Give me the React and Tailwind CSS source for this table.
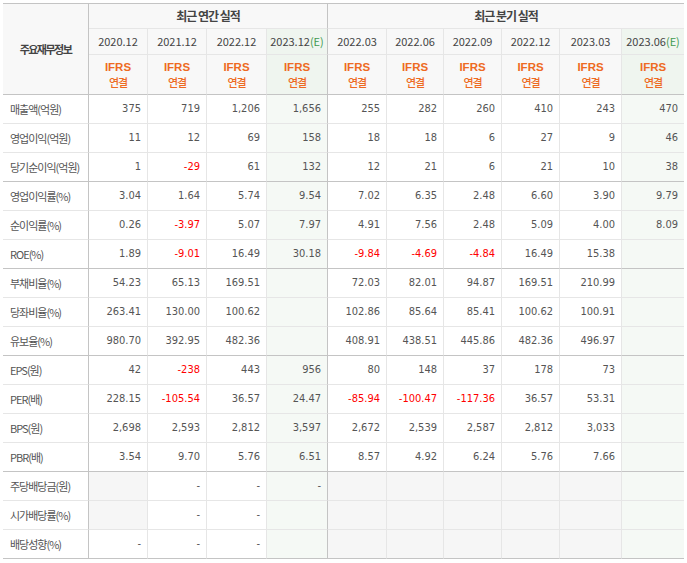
const annual = ["2020.12", "2021.12", "2022.12", "2023.12"];
const quarter = ["2022.03", "2022.06", "2022.09", "2022.12", "2023.03", "2023.06"];
const widths = [86, 59, 59, 60, 61, 59, 57, 58, 58, 62, 62];

// null = empty gray cell, "" = empty cell
const rows = [
  ["매출액(억원)", ["375", "719", "1,206", "1,656"], ["255", "282", "260", "410", "243", "470"]],
  ["영업이익(억원)", ["11", "12", "69", "158"], ["18", "18", "6", "27", "9", "46"]],
  ["당기순이익(억원)", ["1", "-29", "61", "132"], ["12", "21", "6", "21", "10", "38"], true],
  ["영업이익률(%)", ["3.04", "1.64", "5.74", "9.54"], ["7.02", "6.35", "2.48", "6.60", "3.90", "9.79"]],
  ["순이익률(%)", ["0.26", "-3.97", "5.07", "7.97"], ["4.91", "7.56", "2.48", "5.09", "4.00", "8.09"]],
  ["ROE(%)", ["1.89", "-9.01", "16.49", "30.18"], ["-9.84", "-4.69", "-4.84", "16.49", "15.38", ""], true],
  ["부채비율(%)", ["54.23", "65.13", "169.51", ""], ["72.03", "82.01", "94.87", "169.51", "210.99", ""]],
  ["당좌비율(%)", ["263.41", "130.00", "100.62", ""], ["102.86", "85.64", "85.41", "100.62", "100.91", ""]],
  ["유보율(%)", ["980.70", "392.95", "482.36", ""], ["408.91", "438.51", "445.86", "482.36", "496.97", ""], true],
  ["EPS(원)", ["42", "-238", "443", "956"], ["80", "148", "37", "178", "73", ""]],
  ["PER(배)", ["228.15", "-105.54", "36.57", "24.47"], ["-85.94", "-100.47", "-117.36", "36.57", "53.31", ""]],
  ["BPS(원)", ["2,698", "2,593", "2,812", "3,597"], ["2,672", "2,539", "2,587", "2,812", "3,033", ""]],
  ["PBR(배)", ["3.54", "9.70", "5.76", "6.51"], ["8.57", "4.92", "6.24", "5.76", "7.66", ""], true],
  ["주당배당금(원)", [null, "-", "-", "-"], [null, null, null, null, null, ""]],
  ["시가배당률(%)", [null, "-", "-", ""], [null, null, null, null, null, ""]],
  ["배당성향(%)", ["-", "-", "-", ""], [null, null, null, null, null, ""]],
];

const kr = "font-['Noto_Sans_CJK_KR',sans-serif]";
const num = "font-['DejaVu_Sans_Condensed','DejaVu_Sans',sans-serif] font-stretch-condensed";
const dark = "border-[#c4c4c4]";

function borderR(i) {
  // i = column index among 11
  if (i === 10) return "";
  if (i === 0 || i === 4) return "border-r border-r-[#c4c4c4]";
  return "border-r border-r-[#e6e6e6]";
}

function DataCell({ value, col, groupEnd }) {
  const estimate = col === 4 || col === 10;
  const bg = estimate ? "bg-[#f5f9f5]" : value === null ? "bg-[#f6f6f6]" : "bg-white";
  const red = value && value.startsWith("-") && value.length > 1;
  return (
    <td
      className={`h-[29px] p-0 pr-[6px] text-right text-[11px] ${num} ${bg} ${borderR(col)} border-b ${
        groupEnd ? "border-b-[#c4c4c4]" : "border-b-[#e6e6e6]"
      } ${red ? "text-[#ff0000]" : "text-[#555]"}`}
    >
      {value}
    </td>
  );
}

function DateCell({ label, col, estimate }) {
  return (
    <th
      className={`h-[26px] p-0 font-normal text-[11px] text-[#444] ${kr} border-b border-b-[#e6e6e6] ${borderR(col)} ${
        estimate ? "bg-[#eff5ef]" : "bg-[#f8f8f8]"
      }`}
    >
      {label}
      {estimate && <span className="text-[#3f9a4f]">(E)</span>}
    </th>
  );
}

function IfrsCell({ col, estimate }) {
  return (
    <th
      className={`h-[40px] p-0 text-[#ee6a22] border-b ${dark} ${borderR(col)} ${
        estimate ? "bg-[#eff5ef]" : "bg-[#f8f8f8]"
      }`}
    >
      <div className="font-['Liberation_Sans',sans-serif] font-bold text-[11.5px] leading-[13px]">IFRS</div>
      <div className={`mt-[2px] ${kr} font-medium text-[11px] leading-[13px] tracking-[-1px]`}>연결</div>
    </th>
  );
}

export default function App() {
  return (
    <div className="bg-white pt-[3px] pl-[3px]">
      <table className="table-fixed border-separate border-spacing-0 w-[681px]">
        <colgroup>
          {widths.map((w, i) => (
            <col key={i} style={{ width: w }} />
          ))}
        </colgroup>
        <thead>
          <tr>
            <th
              rowSpan={3}
              className={`p-0 bg-[#f8f8f8] border-t ${dark} border-b border-r border-r-[#c4c4c4] text-[11px] font-bold tracking-[-1.5px] text-[#444] ${kr}`}
            >
              주요재무정보
            </th>
            <th
              colSpan={4}
              className={`h-[26px] p-0 bg-[#f8f8f8] border-t ${dark} border-b border-b-[#e6e6e6] border-r border-r-[#c4c4c4] text-[12px] font-bold tracking-[-1px] text-[#444] ${kr}`}
            >
              최근 연간 실적
            </th>
            <th
              colSpan={6}
              className={`h-[26px] p-0 bg-[#f8f8f8] border-t ${dark} border-b border-b-[#e6e6e6] text-[12px] font-bold tracking-[-1px] text-[#444] ${kr}`}
            >
              최근 분기 실적
            </th>
          </tr>
          <tr>
            {annual.map((d, i) => (
              <DateCell key={d} label={d} col={i + 1} estimate={i === 3} />
            ))}
            {quarter.map((d, i) => (
              <DateCell key={d} label={d} col={i + 5} estimate={i === 5} />
            ))}
          </tr>
          <tr>
            {widths.slice(1).map((_, i) => (
              <IfrsCell key={i} col={i + 1} estimate={i === 3 || i === 9} />
            ))}
          </tr>
        </thead>
        <tbody>
          {rows.map(([label, a, q, groupEnd], r) => (
            <tr key={label}>
              <td
                className={`h-[29px] p-0 pl-[7px] text-left text-[11px] tracking-[-1px] text-[#555] ${kr} bg-white border-r border-r-[#c4c4c4] border-b ${
                  groupEnd || r === rows.length - 1 ? "border-b-[#c4c4c4]" : "border-b-[#e6e6e6]"
                }`}
              >
                {label}
              </td>
              {[...a, ...q].map((v, i) => (
                <DataCell key={i} value={v} col={i + 1} groupEnd={groupEnd || r === rows.length - 1} />
              ))}
            </tr>
          ))}
        </tbody>
      </table>
    </div>
  );
}
